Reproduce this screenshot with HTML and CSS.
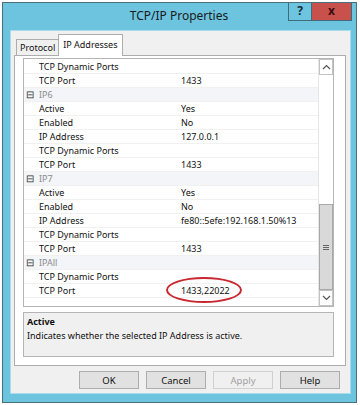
FILE: index.html
```html
<!DOCTYPE html>
<html lang="en">
<head>
  <meta charset="UTF-8" />
  <title>TCP/IP Properties</title>
  <link rel="stylesheet" href="styles.css">
</head>
<body>
  <div class="window">
    <div class="titlebar">
      <div class="title">TCP/IP Properties</div>
      <div class="controls">
        <div class="ctl help-ctl">?</div>
        <div class="ctl close-ctl">x</div>
      </div>
    </div>
    <div class="client">
      <div class="tabs">
        <div class="tab">Protocol</div>
        <div class="tab active">IP Addresses</div>
      </div>
      <div class="panel">
        <div class="grid">
          <div class="rows">
            <div class="row"><span class="name">TCP Dynamic Ports</span><span class="val"></span></div>
            <div class="row"><span class="name">TCP Port</span><span class="val">1433</span></div>
            <div class="row cat"><span class="toggle">&#8863;</span><span class="name">IP6</span></div>
            <div class="row"><span class="name">Active</span><span class="val">Yes</span></div>
            <div class="row"><span class="name">Enabled</span><span class="val">No</span></div>
            <div class="row"><span class="name">IP Address</span><span class="val">127.0.0.1</span></div>
            <div class="row"><span class="name">TCP Dynamic Ports</span><span class="val"></span></div>
            <div class="row"><span class="name">TCP Port</span><span class="val">1433</span></div>
            <div class="row cat"><span class="toggle">&#8863;</span><span class="name">IP7</span></div>
            <div class="row"><span class="name">Active</span><span class="val">Yes</span></div>
            <div class="row"><span class="name">Enabled</span><span class="val">No</span></div>
            <div class="row"><span class="name">IP Address</span><span class="val">fe80::5efe:192.168.1.50%13</span></div>
            <div class="row"><span class="name">TCP Dynamic Ports</span><span class="val"></span></div>
            <div class="row"><span class="name">TCP Port</span><span class="val">1433</span></div>
            <div class="row cat"><span class="toggle">&#8863;</span><span class="name">IPAll</span></div>
            <div class="row"><span class="name">TCP Dynamic Ports</span><span class="val"></span></div>
            <div class="row"><span class="name">TCP Port</span><span class="val marked">1433,22022<span class="ring"></span></span></div>
          </div>
          <div class="scrollbar">
            <div class="arrow">
              <svg width="9" height="6" viewBox="0 0 9 6"><path d="M1 5 L4.5 1.5 L8 5" fill="none" stroke="#555" stroke-width="1.2"/></svg>
            </div>
            <div class="track"></div>
            <div class="thumb"><span class="grip"></span></div>
            <div class="arrow">
              <svg width="9" height="6" viewBox="0 0 9 6"><path d="M1 1 L4.5 4.5 L8 1" fill="none" stroke="#555" stroke-width="1.2"/></svg>
            </div>
          </div>
        </div>
        <div class="desc">
          <div class="desc-title">Active</div>
          <div>Indicates whether the selected IP Address is active.</div>
        </div>
      </div>
      <div class="buttons">
        <button>OK</button>
        <button>Cancel</button>
        <button disabled>Apply</button>
        <button>Help</button>
      </div>
    </div>
  </div>
</body>
</html>
```

FILE: styles.css
```css
body {
  margin: 0;
  background: #fff;
  font-family: "Noto Sans", "Open Sans", sans-serif;
  color: #111;
}
.window {
  margin: 2px;
  width: 355px;
  height: 401px;
  box-sizing: border-box;
  border: 1px solid #4a6f7c;
  background: #6cc4df;
  padding: 0 5px 8px 7px;
  display: flex;
  flex-direction: column;
}
.titlebar {
  height: 27px;
  display: flex;
  align-items: flex-start;
  flex-shrink: 0;
}
.title {
  flex: 1;
  padding-left: 60px;
  text-align: center;
  font-size: 12px;
  line-height: 25px;
  color: #1b1b1b;
}
.controls {
  display: flex;
  margin-right: -1px;
}
.ctl {
  height: 17px;
  line-height: 16px;
  text-align: center;
  font-weight: bold;
  font-size: 12px;
  border: 1px solid #3f6c7c;
  border-top: none;
}
.help-ctl {
  width: 22px;
  color: #1a2b3a;
}
.close-ctl {
  width: 39px;
  background: #c9514b;
  color: #3a0d0d;
  border-left: none;
}
.client {
  flex: 1;
  background: #f0f0f0;
  border: 1px solid #a9dbea;
  padding: 3px 4px 0 3px;
  display: flex;
  flex-direction: column;
  font-size: 9px;
}
.tabs {
  display: flex;
  align-items: flex-end;
  height: 21px;
  margin-left: 2px;
  position: relative;
  z-index: 1;
}
.tab {
  border: 1px solid #adadad;
  border-bottom: none;
  background: #f0f0f0;
  padding: 0 3px;
  height: 15px;
  line-height: 15px;
  font-size: 9px;
}
.tab.active {
  background: #fff;
  line-height: 19px;
  padding: 0 4px;
  margin-left: -1px;
  margin-bottom: -1px;
  height: 21px;
}
.panel {
  background: #fff;
  border: 1px solid #adadad;
  height: 311px;
  box-sizing: border-box;
  padding: 2px 11px 0 8px;
}
.grid {
  border: 1px solid #b5b5b5;
  height: 249px;
  box-sizing: border-box;
  display: flex;
}
.rows {
  flex: 1;
  padding-top: 1px;
}
.row {
  height: 14px;
  line-height: 13px;
  display: flex;
  border-bottom: 1px solid #f1f1f1;
  box-sizing: border-box;
}
.name {
  width: 128px;
  padding-left: 15px;
  flex-shrink: 0;
}
.val {
  flex: 1;
  padding-left: 14px;
}
.row.cat {
  background: #f3f5f8;
}
.row.cat .name {
  padding-left: 3px;
  color: #8c8c8c;
}
.toggle {
  width: 12px;
  text-align: center;
  color: #333;
  font-size: 10px;
}
.marked {
  position: relative;
}
.ring {
  position: absolute;
  left: -1px;
  top: -7px;
  width: 72px;
  height: 22px;
  border: 2px solid #c8272f;
  border-radius: 50%;
}
.scrollbar {
  width: 14px;
  border-left: 1px solid #e6e6e6;
  display: flex;
  flex-direction: column;
  background: #fff;
}
.arrow {
  height: 14px;
  border: 1px solid #c2c2c2;
  display: flex;
  align-items: center;
  justify-content: center;
  background: #fff;
}
.track {
  flex: 1;
}
.thumb {
  height: 84px;
  background: #d9d9d9;
  border: 1px solid #a8a8a8;
  display: flex;
  align-items: center;
  justify-content: center;
}
.grip {
  width: 6px;
  height: 5px;
  border-top: 1px solid #666;
  border-bottom: 1px solid #666;
  box-sizing: border-box;
  background: linear-gradient(#666, #666) center / 100% 1px no-repeat;
}
.desc {
  margin-top: 5px;
  height: 45px;
  box-sizing: border-box;
  border: 1px solid #b5b5b5;
  background: #f0f0f0;
  padding: 2px 3px;
  line-height: 14px;
  font-size: 9px;
}
.desc-title {
  font-weight: bold;
}
.buttons {
  display: flex;
  justify-content: flex-end;
  gap: 7px;
  padding: 5px 6px 0 0;
}
button {
  width: 60px;
  height: 18px;
  border: 1px solid #adadad;
  background: #e1e1e1;
  font-family: "Noto Sans", "Open Sans", sans-serif;
  font-size: 9.5px;
  color: #111;
  padding: 0;
}
button:disabled {
  color: #a0a0a0;
  border-color: #d0d0d0;
  background: #f0f0f0;
}
```
